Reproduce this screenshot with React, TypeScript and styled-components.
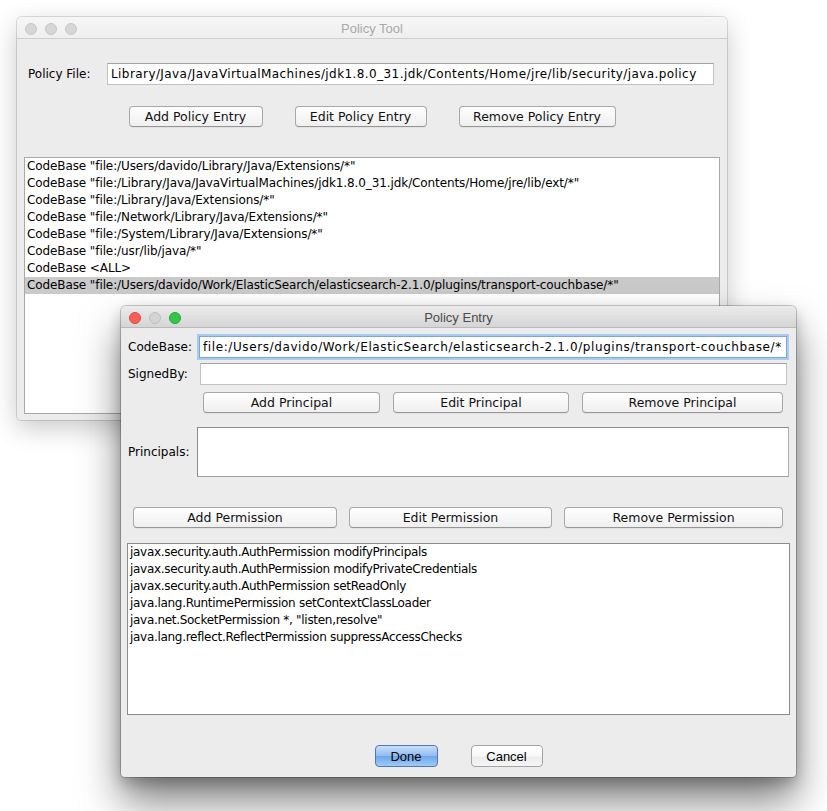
import styled, { createGlobalStyle } from "styled-components";

const GlobalStyle = createGlobalStyle`
  html, body {
    margin: 0;
    padding: 0;
    background: #ffffff;
  }
  body {
    font-family: "DejaVu Sans", "Noto Sans", sans-serif;
    color: #000;
  }
`;

const Desktop = styled.div`
  position: relative;
  width: 827px;
  height: 811px;
  overflow: hidden;
  background: #ffffff;
`;

// windows sit on a free desktop, so their place is given by props
const Window = styled.div<{
  $left: number;
  $top: number;
  $width: number;
  $height: number;
  $active?: boolean;
}>`
  position: absolute;
  left: ${(p) => p.$left}px;
  top: ${(p) => p.$top}px;
  width: ${(p) => p.$width}px;
  height: ${(p) => p.$height}px;
  box-sizing: border-box;
  display: flex;
  flex-direction: column;
  background: #ececec;
  border-radius: 5px 5px 4px 4px;
  overflow: hidden;
  box-shadow: ${(p) =>
    p.$active
      ? "0 0 0 1px rgba(0,0,0,0.2), 0 24px 40px rgba(0,0,0,0.5), 0 6px 14px rgba(0,0,0,0.22)"
      : "0 0 0 1px rgba(0,0,0,0.12), 0 8px 26px rgba(0,0,0,0.22)"};
`;

const TitleBar = styled.div<{ $active?: boolean }>`
  flex: none;
  height: 19px;
  padding-top: 2px;
  display: grid;
  grid-template-columns: 1fr auto 1fr;
  align-items: center;
  border-bottom: 1px solid ${(p) => (p.$active ? "#b9b9b9" : "#cfcfcf")};
  background: ${(p) =>
    p.$active
      ? "linear-gradient(#ebebeb, #d5d5d5)"
      : "linear-gradient(#f6f6f6, #efefef)"};
`;

const Lights = styled.div`
  display: flex;
  gap: 8px;
  padding-left: 8px;
`;

const Light = styled.span<{ $color: string; $edge: string }>`
  width: 12px;
  height: 12px;
  box-sizing: border-box;
  border-radius: 50%;
  background: ${(p) => p.$color};
  border: 1px solid ${(p) => p.$edge};
`;

const Title = styled.div<{ $active?: boolean }>`
  font-family: "Liberation Sans", Arial, sans-serif;
  font-size: 13px;
  color: ${(p) => (p.$active ? "#4a4a4a" : "#a9a9a9")};
`;

const ToolBody = styled.div`
  flex: 1;
  display: flex;
  flex-direction: column;
  padding: 24px 7px 6px 7px;
  min-height: 0;
`;

const EntryBody = styled.div`
  flex: 1;
  display: flex;
  flex-direction: column;
  padding: 8px 6px 11px 6px;
`;

const FieldRow = styled.div<{ $label: number; $top?: number; $right?: number; $indent?: number }>`
  display: grid;
  grid-template-columns: ${(p) => p.$label}px 1fr;
  align-items: center;
  margin-top: ${(p) => p.$top ?? 0}px;
  margin-right: ${(p) => p.$right ?? 0}px;
  padding-left: ${(p) => p.$indent ?? 1}px;
`;

const Label = styled.label`
  font-size: 12px;
  white-space: nowrap;
`;

const TextField = styled.div<{ $focused?: boolean; $tracking?: number }>`
  height: 22px;
  box-sizing: border-box;
  display: flex;
  align-items: center;
  padding: 0 3px;
  background: #fff;
  font-size: 12px;
  letter-spacing: ${(p) => p.$tracking ?? 0.42}px;
  white-space: nowrap;
  overflow: hidden;
  border: 1px solid #c2c2c2;
  border-top-color: #a3a3a3;
  ${(p) =>
    p.$focused &&
    `
    border: 1px solid #7da6df;
    box-shadow: 0 0 0 2px #a9cbf3;
  `}
`;

const ButtonRow = styled.div<{ $columns?: string; $gap: number; $top: number; $left?: number; $right?: number }>`
  display: ${(p) => (p.$columns ? "grid" : "flex")};
  grid-template-columns: ${(p) => p.$columns ?? "none"};
  justify-content: center;
  gap: ${(p) => p.$gap}px;
  margin: ${(p) => p.$top}px ${(p) => p.$right ?? 0}px 0 ${(p) => p.$left ?? 0}px;
`;

const Button = styled.button<{ $width?: number }>`
  height: 21px;
  width: ${(p) => (p.$width ? `${p.$width}px` : "auto")};
  box-sizing: border-box;
  padding: 0;
  border: 1px solid #a8a8a8;
  border-bottom-color: #959595;
  border-radius: 4px;
  background: linear-gradient(#ffffff, #f7f7f7 50%, #efefef);
  box-shadow: 0 1px 0 rgba(0, 0, 0, 0.04);
  font-family: "DejaVu Sans", "Noto Sans", sans-serif;
  font-size: 12.5px;
  color: #111;
  line-height: 19px;
  white-space: nowrap;
`;

const AquaButton = styled.button<{ $width: number; $primary?: boolean }>`
  height: 22px;
  width: ${(p) => p.$width}px;
  box-sizing: border-box;
  padding: 0;
  border-radius: 4px;
  border: 1px solid ${(p) => (p.$primary ? "#5476b8" : "#a3a3a3")};
  background: ${(p) =>
    p.$primary
      ? "linear-gradient(#c8def9, #92bdf1 48%, #6fa7ec 52%, #9fcaf6)"
      : "linear-gradient(#ffffff, #f8f8f8 50%, #ececec 55%, #f6f6f6)"};
  font-family: "Liberation Sans", Arial, sans-serif;
  font-size: 13px;
  color: #000;
`;

const ListBox = styled.div<{ $height?: number; $top: number; $left?: number; $right?: number; $dark?: boolean }>`
  box-sizing: border-box;
  ${(p) => (p.$height ? `height: ${p.$height}px;` : "flex: 1;")}
  margin: ${(p) => p.$top}px ${(p) => p.$right ?? 0}px 0 ${(p) => p.$left ?? 0}px;
  background: #fff;
  border: 1px solid ${(p) => (p.$dark ? "#8c8c8c" : "#a9a9a9")};
  overflow: hidden;
`;

const ListRow = styled.div<{ $selected?: boolean; $tracking?: number }>`
  height: 17px;
  line-height: 17px;
  padding-left: 2px;
  font-size: 12px;
  letter-spacing: ${(p) => p.$tracking ?? -0.1}px;
  white-space: nowrap;
  background: ${(p) => (p.$selected ? "#cacaca" : "transparent")};
`;

const PrincipalRow = styled.div`
  display: grid;
  grid-template-columns: 69px 1fr;
  align-items: center;
  margin: 14px 1px 0 0;
  padding-left: 1px;
`;

const PrincipalBox = styled.div`
  height: 50px;
  box-sizing: border-box;
  background: #fff;
  border: 1px solid #8c8c8c;
  border-right-color: #b0b0b0;
  border-bottom-color: #a0a0a0;
`;

const TrafficLights = ({ active }: { active?: boolean }) => (
  <Lights>
    {active ? (
      <>
        <Light $color="#fc5f57" $edge="#df4640" />
        <Light $color="#d3d3d3" $edge="#bfbfbf" />
        <Light $color="#33c748" $edge="#24a536" />
      </>
    ) : (
      <>
        <Light $color="#d6d6d6" $edge="#c6c6c6" />
        <Light $color="#d6d6d6" $edge="#c6c6c6" />
        <Light $color="#d6d6d6" $edge="#c6c6c6" />
      </>
    )}
  </Lights>
);

const codeBases = [
  'CodeBase "file:/Users/davido/Library/Java/Extensions/*"',
  'CodeBase "file:/Library/Java/JavaVirtualMachines/jdk1.8.0_31.jdk/Contents/Home/jre/lib/ext/*"',
  'CodeBase "file:/Library/Java/Extensions/*"',
  'CodeBase "file:/Network/Library/Java/Extensions/*"',
  'CodeBase "file:/System/Library/Java/Extensions/*"',
  'CodeBase "file:/usr/lib/java/*"',
  "CodeBase <ALL>",
  'CodeBase "file:/Users/davido/Work/ElasticSearch/elasticsearch-2.1.0/plugins/transport-couchbase/*"',
];

const permissions = [
  "javax.security.auth.AuthPermission modifyPrincipals",
  "javax.security.auth.AuthPermission modifyPrivateCredentials",
  "javax.security.auth.AuthPermission setReadOnly",
  "java.lang.RuntimePermission setContextClassLoader",
  'java.net.SocketPermission *, "listen,resolve"',
  "java.lang.reflect.ReflectPermission suppressAccessChecks",
];

export default function App() {
  return (
    <>
      <GlobalStyle />
      <Desktop>
        <Window $left={17} $top={17} $width={710} $height={403}>
          <TitleBar>
            <TrafficLights />
            <Title>Policy Tool</Title>
            <span />
          </TitleBar>
          <ToolBody>
            <FieldRow $label={79} $right={6} $indent={4}>
              <Label>Policy File:</Label>
              <TextField>
                Library/Java/JavaVirtualMachines/jdk1.8.0_31.jdk/Contents/Home/jre/lib/security/java.policy
              </TextField>
            </FieldRow>
            <ButtonRow $gap={32} $top={21}>
              <Button $width={134}>Add Policy Entry</Button>
              <Button $width={132}>Edit Policy Entry</Button>
              <Button $width={157}>Remove Policy Entry</Button>
            </ButtonRow>
            <ListBox $top={30}>
              {codeBases.map((c, i) => (
                <ListRow key={c} $selected={i === codeBases.length - 1}>
                  {c}
                </ListRow>
              ))}
            </ListBox>
          </ToolBody>
        </Window>

        <Window $left={121} $top={306} $width={675} $height={471} $active>
          <TitleBar $active>
            <TrafficLights active />
            <Title $active>Policy Entry</Title>
            <span />
          </TitleBar>
          <EntryBody>
            <FieldRow $label={71} $right={3}>
              <Label>CodeBase:</Label>
              <TextField $focused $tracking={0.6}>
                file:/Users/davido/Work/ElasticSearch/elasticsearch-2.1.0/plugins/transport-couchbase/*
              </TextField>
            </FieldRow>
            <FieldRow $label={72} $right={3} $top={5}>
              <Label>SignedBy:</Label>
              <TextField />
            </FieldRow>
            <ButtonRow $columns="177fr 176fr 201fr" $gap={13} $top={7} $left={76} $right={7}>
              <Button>Add Principal</Button>
              <Button>Edit Principal</Button>
              <Button>Remove Principal</Button>
            </ButtonRow>
            <PrincipalRow>
              <Label>Principals:</Label>
              <PrincipalBox />
            </PrincipalRow>
            <ButtonRow $columns="204fr 203fr 219fr" $gap={12} $top={30} $left={6} $right={7}>
              <Button>Add Permission</Button>
              <Button>Edit Permission</Button>
              <Button>Remove Permission</Button>
            </ButtonRow>
            <ListBox $top={15} $height={172} $dark>
              {permissions.map((p) => (
                <ListRow key={p} $tracking={-0.3}>
                  {p}
                </ListRow>
              ))}
            </ListBox>
            <ButtonRow $gap={33} $top={30}>
              <AquaButton $width={63} $primary>
                Done
              </AquaButton>
              <AquaButton $width={72}>Cancel</AquaButton>
            </ButtonRow>
          </EntryBody>
        </Window>
      </Desktop>
    </>
  );
}
